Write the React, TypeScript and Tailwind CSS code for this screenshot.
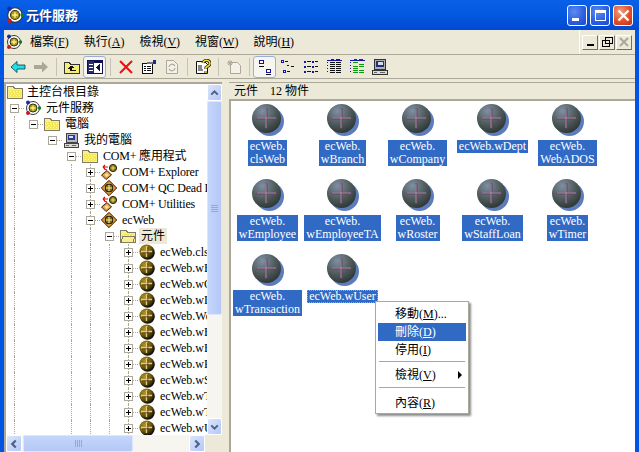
// React
import { ReactNode, useId } from "react"

const font = "font-['Liberation_Serif','Noto_Sans_CJK_TC',serif]"

// ---- tree and toolbar icons

function FolderIcon({ open }: { open?: boolean }) {
  return (
    <svg width="16" height="16" viewBox="0 0 16 16" shapeRendering="crispEdges">
      <path d="M.5 2.500h6l1 2h8v10H.5z" fill="#f7f08c" stroke="#7f7b66" />
      <path d="M2 6h12v7H2z" fill="#f2e85a" />
      <path d="M3 7h1v1H3zM6 7h1v1H6zM9 7h1v1H9zM12 7h1v1h-1zM4 9h1v1H4zM7 9h1v1H7zM10 9h1v1h-1zM3 11h1v1H3zM6 11h1v1H6zM9 11h1v1H9zM12 11h1v1h-1z" fill="#fffde0" />
      {open && <path d="M3 8h12l-2 6H1z" fill="#f7f08c" stroke="#7f7b66" />}
    </svg>
  )
}

function OrbitIcon({ size = 16 }: { size?: number }) {
  return (
    <svg width={size} height={size} viewBox="0 0 16 16">
      <circle cx="8" cy="8" r="6.5" fill="#fff" stroke="#333" strokeWidth="1" />
      <circle cx="8" cy="8" r="4" fill="#a89a20" stroke="#3a3410" />
      <path d="M8 5.500v5M5.500 8h5" stroke="#fff27a" strokeWidth="1.300" />
      <circle cx="3" cy="2.500" r="2" fill="#1c2aa8" />
      <circle cx="3" cy="13" r="2" fill="#c81818" />
      <circle cx="14.500" cy="8" r="1.700" fill="#10801c" />
    </svg>
  )
}

function ComputerIcon() {
  return (
    <svg width="16" height="16" viewBox="0 0 16 16" shapeRendering="crispEdges">
      <path d="M3 1h11v9H3z" fill="#b8b8c0" stroke="#444" />
      <path d="M5 3h7v5H5z" fill="#2a3a9a" />
      <path d="M6 4h4v2H6z" fill="#d8e0f0" />
      <path d="M1 11h14v4H1z" fill="#d8d8d0" stroke="#444" />
      <path d="M3 13h3v1H3z" fill="#18a018" />
      <path d="M9 13h4v1H9z" fill="#666" />
    </svg>
  )
}

function GoldBall() {
  const id = useId()
  return (
    <svg width="16" height="16" viewBox="0 0 16 16">
      <defs>
        <radialGradient id={id} cx="35%" cy="30%" r="75%">
          <stop offset="0" stopColor="#a89020" />
          <stop offset="0.6" stopColor="#6e5c08" />
          <stop offset="1" stopColor="#1c1802" />
        </radialGradient>
      </defs>
      <circle cx="8.600" cy="8.600" r="7.200" fill="#111" />
      <circle cx="7.600" cy="7.600" r="7.200" fill={`url(#${id})`} />
      <path d="M7.600 2v11M2 7.600h11" stroke="#e8c888" strokeWidth="1.600" />
      <path d="M8.800 3v10M3 8.800h10" stroke="#2a1e04" strokeWidth="0.600" />
    </svg>
  )
}

function BundleIcon({ stopped }: { stopped?: boolean }) {
  if (stopped) {
    return (
      <svg width="16" height="16" viewBox="0 0 16 16">
        <path d="M.5 11l5.500-4.500 4.500 4.500-5.500 4.500z" fill="#e8a048" stroke="#3a2006" />
        <path d="M3.500 11l2.500-2 2 2-2.500 2z" fill="#f8e0a0" />
        <circle cx="12" cy="4" r="3.600" fill="#8a7612" stroke="#2c2404" />
        <path d="M12 1.800v4.400M9.800 4h4.400" stroke="#f2e8a0" strokeWidth="0.800" />
        <path d="M2 3h5M2 3l2-2M2 3l2 2M3 5l3 1" stroke="#e01010" strokeWidth="1.200" fill="none" />
      </svg>
    )
  }
  return (
    <svg width="16" height="16" viewBox="0 0 16 16">
      <path d="M8 .3L15.700 8 8 15.700.3 8z" fill="#d98a2c" stroke="#3a2006" />
      <path d="M8 2.500L13.500 8 8 13.500 2.500 8z" fill="#f8dc98" />
      <circle cx="8" cy="8" r="4" fill="#7a680c" stroke="#241c02" />
      <path d="M8 5v6M5 8h6" stroke="#f6eeb0" strokeWidth="1.100" />
    </svg>
  )
}

function BigBall() {
  const id = useId()
  return (
    <svg width="32" height="32" viewBox="0 0 32 32">
      <defs>
        <radialGradient id={id} cx="36%" cy="24%" r="80%">
          <stop offset="0" stopColor="#7f90a4" />
          <stop offset="0.55" stopColor="#505c5c" />
          <stop offset="1" stopColor="#2c3634" />
        </radialGradient>
      </defs>
      <circle cx="17.500" cy="17.500" r="14.500" fill="#5d7cbc" />
      <circle cx="14.500" cy="14.500" r="14.500" fill={`url(#${id})`} />
      <path d="M14.500 4.500v20M4.500 14.500h20" stroke="#6a3f62" strokeWidth="2" />
      <path d="M14 5v19M5 14h19" stroke="#b8b0bc" strokeWidth="0.700" />
    </svg>
  )
}

function ToolIcon({ name }: { name: string }) {
  switch (name) {
    case "back":
      return (
        <svg width="16" height="16" viewBox="0 0 16 16">
          <path d="M1 8l6-5.500V6h8v4H7v3.500z" fill="#1de0e8" stroke="#0a3a40" strokeWidth="0.800" />
        </svg>
      )
    case "forward":
      return (
        <svg width="16" height="16" viewBox="0 0 16 16">
          <path d="M15 8L9 2.500V6H1v4h8v3.500z" fill="#aca899" />
        </svg>
      )
    case "up":
      return (
        <svg width="16" height="16" viewBox="0 0 16 16" shapeRendering="crispEdges">
          <path d="M.5 3.500h5l1 2h9v9H.5z" fill="#f6ee70" stroke="#333" />
          <path d="M7 6.500L4 9.500h2v2h6v-1H8v-2h2z" fill="#111" />
        </svg>
      )
    case "pane":
      return (
        <svg width="16" height="16" viewBox="0 0 16 16" shapeRendering="crispEdges">
          <path d="M.5 1.500h15v13H.5z" fill="#fff" stroke="#10104a" />
          <path d="M1 2h14v2H1z" fill="#10104a" />
          <path d="M1 2h6v12H1z" fill="#2a2a70" />
          <path d="M2 5h4v1H2zM2 8h4v1H2zM2 11h4v1H2z" fill="#fff" />
          <path d="M13 5v7L9 8.500z" fill="#10104a" />
        </svg>
      )
    case "delete":
      return (
        <svg width="16" height="16" viewBox="0 0 16 16">
          <path d="M2 2l12 12M14 2L2 14" stroke="#e81010" strokeWidth="2" />
        </svg>
      )
    case "props":
      return (
        <svg width="16" height="16" viewBox="0 0 16 16" shapeRendering="crispEdges">
          <path d="M1.500 4.500h10v10h-10z" fill="#fff" stroke="#111" />
          <path d="M3 7h2v1H3zM6 7h4v1H6zM3 9h2v1H3zM6 9h4v1H6zM3 11h2v1H3zM6 11h4v1H6z" fill="#111" />
          <path d="M6 3h6v2H6z" fill="#777" />
          <path d="M12 1h3v4h-3z" fill="#1a2a90" />
        </svg>
      )
    case "refresh":
      return (
        <svg width="16" height="16" viewBox="0 0 16 16">
          <path d="M2.500 1.500h7l4 4v9h-11z" fill="#f4f2e8" stroke="#aca899" />
          <path d="M5 8a3 3 0 0 1 5-2l1 1M11 9a3 3 0 0 1-5 2l-1-1" fill="none" stroke="#aca899" strokeWidth="1.200" />
        </svg>
      )
    case "help":
      return (
        <svg width="16" height="16" viewBox="0 0 16 16">
          <path d="M1.500 2.500h8l3 3v9h-11z" fill="#fff" stroke="#111" />
          <path d="M3 7h4M3 9h4M3 11h5" stroke="#111" />
          <path d="M8 4a3.500 3 0 1 1 5 3l-2 1.500V10M11 12v2" fill="none" stroke="#111" strokeWidth="3" />
          <path d="M8 4a3.500 3 0 1 1 5 3l-2 1.500V10M11 12v2" fill="none" stroke="#f5e020" strokeWidth="1.600" />
        </svg>
      )
    case "new":
      return (
        <svg width="16" height="16" viewBox="0 0 16 16">
          <path d="M4.500 3.500h7l3 3v8h-10z" fill="#f4f2e8" stroke="#aca899" />
          <path d="M4 1v6M1 4h6M2 2l4 4M6 2L2 6" stroke="#aca899" />
        </svg>
      )
    case "large":
      return (
        <svg width="16" height="16" viewBox="0 0 16 16" shapeRendering="crispEdges">
          <path d="M2 1h5v4H2zM9 10h5v4H9z" fill="#1414a0" />
          <path d="M3 2h3v2H3zM10 11h3v2h-3z" fill="#fff" />
          <path d="M2 7h5v1H2zM9 15h5v1H9z" fill="#111" />
        </svg>
      )
    case "small":
      return (
        <svg width="16" height="16" viewBox="0 0 16 16" shapeRendering="crispEdges">
          <path d="M1 1h3v3H1zM3 11h3v3H3z" fill="#1414a0" />
          <path d="M2 2h1v1H2zM4 12h1v1H4z" fill="#fff" />
          <path d="M5 2h3v1H5zM7 6h2v1H7zM11 7h3v1h-3zM7 12h3v1H7z" fill="#111" />
        </svg>
      )
    case "list":
      return (
        <svg width="16" height="16" viewBox="0 0 16 16" shapeRendering="crispEdges">
          <path d="M1 2h2v2H1zM1 7h2v2H1zM1 12h2v2H1zM9 2h2v2H9zM9 7h2v2H9zM9 12h2v2H9z" fill="#1414a0" />
          <path d="M4 2h4v1H4zM4 7h4v1H4zM4 12h4v1H4zM12 2h3v1h-3zM12 7h3v1h-3zM12 12h3v1h-3z" fill="#111" />
        </svg>
      )
    case "detail":
      return (
        <svg width="16" height="16" viewBox="0 0 16 16" shapeRendering="crispEdges">
          <path d="M1 1h15v1H1z" fill="#1414a0" />
          <path d="M5 0h3v1H5zM10 0h4v1h-4zM1 3h1v1H1zM1 6h1v1H1zM1 9h1v1H1zM1 12h1v1H1z" fill="#1414a0" />
          <path d="M4 3h5v1H4zM10 3h5v1h-5zM4 5h5v1H4zM10 5h5v1h-5zM4 7h5v1H4zM10 7h5v1h-5zM4 9h5v1H4zM10 9h5v1h-5zM4 11h5v1H4zM10 11h5v1h-5zM4 13h5v1H4zM10 13h5v1h-5z" fill="#111" />
        </svg>
      )
    case "status":
      return (
        <svg width="16" height="16" viewBox="0 0 16 16" shapeRendering="crispEdges">
          <path d="M1 1h15v1H1z" fill="#1414a0" />
          <path d="M5 0h3v1H5zM10 0h4v1h-4z" fill="#333" />
          <path d="M1 3h1v1H1zM1 6h1v1H1zM1 9h1v1H1zM1 12h1v1H1z" fill="#1414a0" />
          <path d="M4 3h5v1H4zM10 5h5v1h-5zM4 7h5v1H4zM10 7h5v1h-5zM4 9h5v1H4zM4 11h5v1H4zM10 11h5v1h-5zM4 13h5v1H4zM10 13h5v1h-5z" fill="#0a9a0a" />
        </svg>
      )
    default:
      return (
        <svg width="16" height="16" viewBox="0 0 16 16" shapeRendering="crispEdges">
          <path d="M2.500 .5h11v10h-11z" fill="#aeb0b8" stroke="#333" />
          <path d="M4 2h8v6H4z" fill="#20307e" />
          <path d="M6 3h5v3H6z" fill="#d8dce8" />
          <path d="M.5 11.500h15v4H.5z" fill="#dcdcd4" stroke="#333" />
          <path d="M2 13h3v1H2zM8 13h5v1H8z" fill="#666" />
        </svg>
      )
  }
}

// ---- window chrome

function CaptionButton({ kind }: { kind: "min" | "max" | "close" }) {
  const bg =
    kind === "close"
      ? "bg-[radial-gradient(circle_at_35%_30%,#f0a080,#e0502a_55%,#c03010)]"
      : "bg-[radial-gradient(circle_at_35%_30%,#5c8cf0,#2a5ce0_60%,#1a48d0)]"
  return (
    <div className={`w-[20px] h-[21px] rounded-[3px] border border-white flex items-center justify-center ${bg}`}>
      <svg width="15" height="15" viewBox="0 0 15 15" shapeRendering={kind === "close" ? undefined : "crispEdges"}>
        {kind === "min" && <path d="M2 10h7v3H2z" fill="#fff" />}
        {kind === "max" && <path d="M2 2h11v11H2zM3 5v7h9V5z" fill="#fff" fillRule="evenodd" />}
        {kind === "close" && <path d="M2.500 2.500l10 10M12.500 2.500l-10 10" stroke="#fff" strokeWidth="2.400" />}
      </svg>
    </div>
  )
}

function MdiButton({ children }: { children: ReactNode }) {
  return (
    <div className="w-[16px] h-[15px] bg-[#ece9d8] border-t border-l border-t-white border-l-white border-r border-b border-r-[#716f64] border-b-[#716f64] flex items-center justify-center">
      {children}
    </div>
  )
}

function MenuItem({ label, hot }: { label: string; hot: string }) {
  return (
    <span className="whitespace-pre">
      {label}(<u>{hot}</u>)
    </span>
  )
}

function ScrollButton({ dir }: { dir: "up" | "down" | "left" | "right" }) {
  const d = {
    up: "M4 10l4-4 4 4",
    down: "M4 6l4 4 4-4",
    left: "M10 4L6 8l4 4",
    right: "M6 4l4 4-4 4",
  }[dir]
  const width = dir === "up" || dir === "down" ? "w-[15px]" : "w-[16px]"
  return (
    <div className={`${width} h-[17px] shrink-0 rounded-[2px] border border-white bg-gradient-to-br from-[#dbe6fd] to-[#b4c8f6] flex items-center justify-center`}>
      <svg width="14" height="14" viewBox="0 0 16 16">
        <path d={d} fill="none" stroke="#4d6185" strokeWidth="2.500" />
      </svg>
    </div>
  )
}

// ---- tree

type Row = {
  level: number
  guides: number[]
  state?: "plus" | "minus"
  icon: ReactNode
  label: string
  selected?: boolean
  joined?: boolean
}

const componentNames = ["ecWeb.clsWeb", "ecWeb.wBranch", "ecWeb.wCompany", "ecWeb.wDept", "ecWeb.WebADOS", "ecWeb.wEmployee", "ecWeb.wEmployeeTA", "ecWeb.wRoster", "ecWeb.wStaffLoan", "ecWeb.wTimer", "ecWeb.wTransaction", "ecWeb.wUser"]

const tree_rows: Row[] = [
  { level: 0, guides: [], state: "minus", icon: <OrbitIcon />, label: "元件服務" },
  { level: 1, guides: [0], state: "minus", icon: <FolderIcon />, label: "電腦" },
  { level: 2, guides: [0], state: "minus", icon: <ComputerIcon />, label: "我的電腦" },
  { level: 3, guides: [0], state: "minus", icon: <FolderIcon />, label: "COM+ 應用程式" },
  { level: 4, guides: [0, 3], state: "plus", icon: <BundleIcon stopped />, label: "COM+ Explorer", joined: true },
  { level: 4, guides: [0, 3], state: "plus", icon: <BundleIcon />, label: "COM+ QC Dead Letter", joined: true },
  { level: 4, guides: [0, 3], state: "plus", icon: <BundleIcon stopped />, label: "COM+ Utilities", joined: true },
  { level: 4, guides: [0, 3], state: "minus", icon: <BundleIcon />, label: "ecWeb", joined: true },
  { level: 5, guides: [0, 3, 4], state: "minus", icon: <FolderIcon open />, label: "元件", selected: true },
  ...componentNames.map((label) => ({ level: 6, guides: [0, 3, 4, 5], state: "plus" as const, icon: <GoldBall />, label, joined: true })),
]

function Expander({ state, joined }: { state?: "plus" | "minus"; joined?: boolean }) {
  return (
    <div className="relative w-[19px] h-4 shrink-0 flex items-center">
      {joined && <div className="absolute left-[9px] top-0 bottom-0 border-l border-dotted border-[#aca899]" />}
      <div className="absolute left-[9px] top-[8px] w-[10px] border-t border-dotted border-[#aca899]" />
      <div className="relative ml-[5px] w-[9px] h-[9px] bg-white border border-[#aca899]">
        <div className="absolute left-[1px] top-[3px] w-[5px] h-px bg-black" />
        {state === "plus" && <div className="absolute left-[3px] top-[1px] w-px h-[5px] bg-black" />}
      </div>
    </div>
  )
}

function TreeRow({ row }: { row: Row }) {
  const cells = Array.from({ length: row.level }, (_, i) => i)
  return (
    <div className="flex items-center h-4 -ml-px whitespace-nowrap">
      {cells.map((i) => (
        <div key={i} className="w-[19px] h-4 shrink-0 pl-[9px]">
          {row.guides.includes(i) && <div className="h-full border-l border-dotted border-[#aca899]" />}
        </div>
      ))}
      <Expander state={row.state} joined={row.joined} />
      <div className="ml-px w-4 h-4 shrink-0">{row.icon}</div>
      <span className={`ml-[3px] px-[2px] h-4 leading-[16px] ${row.selected ? "bg-[#ece9d8]" : ""} ${row.label.startsWith("COM+") ? "tracking-[-0.2px]" : ""}`}>{row.label}</span>
    </div>
  )
}

function TreePane() {
  return (
    <div className="w-[218px] flex flex-col border-t-2 border-l-2 border-[#aca899] bg-white">
      <div className="flex-1 flex min-h-0">
        <div className="w-[201px] overflow-hidden pt-0">
          <div className="flex items-center h-4 pl-px">
            <FolderIcon />
            <span className="ml-1 leading-[16px]">主控台根目錄</span>
          </div>
          {tree_rows.map((row, key) => (
            <TreeRow key={key} row={row} />
          ))}
        </div>
        <div className="w-[15px] flex flex-col bg-[#f6f5ef]">
          <ScrollButton dir="up" />
          <div className="h-[214px] w-[15px] rounded-[2px] border border-[#dde6fa] bg-gradient-to-r from-[#c5d6fc] to-[#b4c8f6] flex flex-col gap-px items-center justify-center">
            <div className="w-[7px] h-px bg-[#8ea8e0]" />
            <div className="w-[7px] h-px bg-[#8ea8e0]" />
            <div className="w-[7px] h-px bg-[#8ea8e0]" />
            <div className="w-[7px] h-px bg-[#8ea8e0]" />
          </div>
          <div className="flex-1" />
          <ScrollButton dir="down" />
        </div>
      </div>
      <div className="h-[17px] shrink-0 flex bg-[#f6f5ef]">
        <ScrollButton dir="left" />
        <div className="ml-px w-[110px] rounded-[2px] border border-[#dde6fa] bg-gradient-to-b from-[#c5d6fc] to-[#b4c8f6] flex gap-px items-center justify-center">
          <div className="w-px h-[7px] bg-[#8ea8e0]" />
          <div className="w-px h-[7px] bg-[#8ea8e0]" />
          <div className="w-px h-[7px] bg-[#8ea8e0]" />
          <div className="w-px h-[7px] bg-[#8ea8e0]" />
        </div>
        <div className="flex-1" />
        <ScrollButton dir="right" />
        <div className="w-[17px] bg-[#ece9d8]" />
      </div>
    </div>
  )
}

// ---- component list

const components = [
  ["ecWeb.", "clsWeb"],
  ["ecWeb.", "wBranch"],
  ["ecWeb.", "wCompany"],
  ["ecWeb.wDept"],
  ["ecWeb.", "WebADOS"],
  ["ecWeb.", "wEmployee"],
  ["ecWeb.", "wEmployeeTA"],
  ["ecWeb.", "wRoster"],
  ["ecWeb.", "wStaffLoan"],
  ["ecWeb.", "wTimer"],
  ["ecWeb.", "wTransaction"],
  ["ecWeb.wUser"],
]

function ComponentItem({ lines, focus }: { lines: string[]; focus?: boolean }) {
  return (
    <div className="flex flex-col items-center pt-[3px]">
      <BigBall />
      <div className={`mt-1 px-[2px] w-max text-center text-white bg-[#316ac5] leading-[13px] ${focus ? "outline-1 outline-dotted -outline-offset-1 outline-[#d8a040]" : ""}`}>
        {lines.map((line) => (
          <div key={line} className="whitespace-nowrap">{line}</div>
        ))}
      </div>
    </div>
  )
}

function ContextItem({ label, hot, active, suffix, arrow }: { label: string; hot: string; active?: boolean; suffix?: string; arrow?: boolean }) {
  return (
    <div className={`h-[18px] flex items-center justify-between pl-[17px] pr-[4px] leading-[18px] ${active ? "bg-[#316ac5] text-white" : ""}`}>
      <span className="whitespace-pre">
        {label}(<u>{hot}</u>){suffix}
      </span>
      {arrow && <span className="w-0 h-0 border-y-[4px] border-y-transparent border-l-[4px] border-l-black" />}
    </div>
  )
}

function ContextMenu() {
  return (
    <div className="absolute left-[144px] top-[200px] w-[94px] h-[113px] bg-white border border-[#aca899] shadow-[2px_2px_2px_rgba(0,0,0,0.45)] px-[2px] pt-[3px]">
      <ContextItem label="移動" hot="M" suffix="..." />
      <ContextItem label="刪除" hot="D" active />
      <ContextItem label="停用" hot="I" />
      <div className="mt-[2px] mb-[4px] mx-px h-px bg-[#aca899]" />
      <ContextItem label="檢視" hot="V" arrow />
      <div className="mt-[3px] mb-[5px] mx-px h-px bg-[#aca899]" />
      <div className="mt-[6px]">
        <ContextItem label="內容" hot="R" />
      </div>
    </div>
  )
}

const toolbar = ["back", "forward", "|", "up", "pane", "|", "delete", "props", "refresh", "|", "help", "|", "new", "|", "large", "small", "list", "detail", "status", "computer"]

export default function App() {
  return (
    <div className={`w-[639px] h-[452px] overflow-hidden flex flex-col bg-[#0055e5] text-black text-[12px] ${font}`}>
      <div className="h-[30px] shrink-0 flex items-center bg-gradient-to-b from-[#0a60e8] via-[#0358e0] to-[#0348d0] pl-[6px] pr-[6px]">
        <OrbitIcon size={18} />
        <span className="ml-[2px] text-white font-bold text-[13px] font-['Noto_Sans_CJK_TC',sans-serif] [text-shadow:1px_1px_1px_#0a2a80]">元件服務</span>
        <div className="ml-auto flex gap-[3px]">
          <CaptionButton kind="min" />
          <CaptionButton kind="max" />
          <CaptionButton kind="close" />
        </div>
      </div>

      <div className="flex-1 min-h-0 mx-[4px] flex flex-col bg-[#ece9d8]">
        <div className="h-[25px] shrink-0 flex items-center border-b border-[#aca899]">
          <div className="ml-[2px]">
            <OrbitIcon />
          </div>
          <div className="ml-[8px] flex gap-[15px]">
            <MenuItem label="檔案" hot="F" />
            <MenuItem label="執行" hot="A" />
            <MenuItem label="檢視" hot="V" />
            <MenuItem label="視窗" hot="W" />
            <MenuItem label="說明" hot="H" />
          </div>
          <div className="ml-auto h-full border-l border-white flex items-center gap-px pl-[2px] pr-[3px]">
            <MdiButton>
              <div className="w-[7px] h-[2px] bg-black mt-[6px]" />
            </MdiButton>
            <MdiButton>
              <svg width="11" height="11" viewBox="0 0 11 11" shapeRendering="crispEdges">
                <path d="M3.500 .5h7v6h-7zM.5 3.500h7v6h-7z" fill="#ece9d8" stroke="#000" />
              </svg>
            </MdiButton>
            <MdiButton>
              <svg width="10" height="10" viewBox="0 0 10 10">
                <path d="M1 1l8 8M9 1L1 9" stroke="#aca899" strokeWidth="2" />
              </svg>
            </MdiButton>
          </div>
        </div>

        <div className="h-[24px] shrink-0 flex items-center pl-[2px] border-b border-[#aca899]">
          {toolbar.map((name, key) =>
            name === "|" ? (
              <div key={key} className="w-[8px] flex justify-center">
                <div className="w-px h-[18px] bg-[#c5c2b8]" />
              </div>
            ) : (
              <div key={key} className={`w-[23px] h-[22px] rounded-[3px] flex items-center justify-center ${name === "pane" || name === "large" ? "bg-[#f6f5f0] border border-[#98b0d8]" : ""}`}>
                <ToolIcon name={name} />
              </div>
            )
          )}
        </div>

        <div className="flex-1 min-h-0 flex pt-[3px]">
          <TreePane />
          <div className="w-[7px] shrink-0" />
          <div className="flex-1 min-w-0 flex flex-col">
            <div className="h-[17px] shrink-0 border-t border-[#aca899] pl-[5px] leading-[16px] whitespace-pre">元件    12 物件</div>
            <div className="relative flex-1 min-h-0 bg-white border-t-2 border-l-2 border-[#aca899]">
              <div className="-ml-px grid grid-cols-[repeat(5,75px)] auto-rows-[75px]">
                {components.map((lines, key) => (
                  <ComponentItem key={key} lines={lines} focus={key === 11} />
                ))}
              </div>
              <ContextMenu />
            </div>
          </div>
        </div>
      </div>
    </div>
  )
}
